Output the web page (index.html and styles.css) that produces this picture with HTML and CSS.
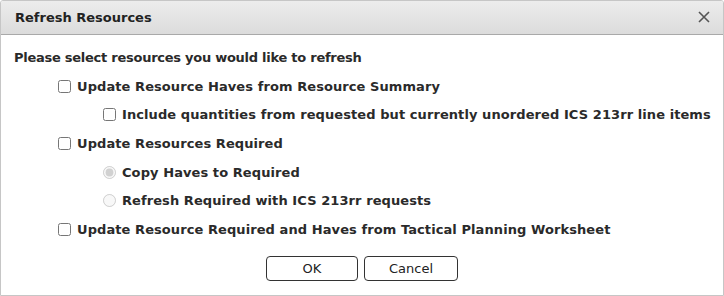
FILE: index.html
```html
<!DOCTYPE html>
<html>
<head>
<meta charset="utf-8">
<link rel="stylesheet" href="styles.css">
</head>
<body>
<div class="dialog">
  <div class="header">
    <span class="title">Refresh Resources</span>
    <span class="close"><svg width="12" height="12" viewBox="0 0 12 12"><path d="M1 1 L11 11 M11 1 L1 11" stroke="#555" stroke-width="1.6" fill="none"/></svg></span>
  </div>
  <div class="content">
    <div class="row prompt">Please select resources you would like to refresh</div>
    <label class="row lvl1"><input type="checkbox"><span>Update Resource Haves from Resource Summary</span></label>
    <label class="row lvl2"><input type="checkbox"><span>Include quantities from requested but currently unordered ICS 213rr line items</span></label>
    <label class="row lvl1"><input type="checkbox"><span>Update Resources Required</span></label>
    <label class="row lvl2"><input type="radio" name="req" checked disabled><span>Copy Haves to Required</span></label>
    <label class="row lvl2"><input type="radio" name="req" disabled><span>Refresh Required with ICS 213rr requests</span></label>
    <label class="row lvl1"><input type="checkbox"><span>Update Resource Required and Haves from Tactical Planning Worksheet</span></label>
    <div class="buttons">
      <button class="btn ok">OK</button>
      <button class="btn cancel">Cancel</button>
    </div>
  </div>
</div>
</body>
</html>
```
FILE: styles.css
```css
html, body {
  margin: 0;
  padding: 0;
  background: #ffffff;
}
body {
  font-family: "DejaVu Sans", Verdana, sans-serif;
  font-size: 13px;
  color: #222;
}
.dialog {
  width: 724px;
  height: 296px;
  box-sizing: border-box;
  border: 1px solid #c6c6c6;
  border-radius: 3px 3px 0 0;
  overflow: hidden;
}
.header {
  height: 34px;
  box-sizing: border-box;
  border-bottom: 1px solid #a9a9a9;
  background: linear-gradient(#ececec, #dcdcdc);
  display: flex;
  align-items: center;
  justify-content: space-between;
  padding: 0 13px 0 14px;
}
.title {
  font-weight: bold;
  color: #222;
}
.close {
  display: flex;
  align-items: center;
  margin-top: -1px;
}
.content {
  padding: 8px 0 0 13px;
}
.row {
  height: 28.7px;
  display: flex;
  align-items: center;
  font-weight: bold;
  color: #2a2a2a;
  letter-spacing: 0.08px;
}
.row.prompt {
  font-size: 13px;
  letter-spacing: -0.26px;
}
.row input {
  width: 13px;
  height: 13px;
  margin: 0 6px 0 0;
  flex: none;
}
.lvl1 {
  padding-left: 44px;
}
.lvl2 {
  padding-left: 89px;
}
.buttons {
  display: flex;
  justify-content: center;
  gap: 6px;
  margin-top: 12px;
  margin-left: -13px;
}
.btn {
  height: 25px;
  font-family: "DejaVu Sans", Verdana, sans-serif;
  font-size: 13px;
  color: #222;
  background: #ffffff;
  border: 1px solid #333;
  border-radius: 4px;
  padding: 0;
}
.ok {
  width: 92px;
}
.cancel {
  width: 94px;
}
```
